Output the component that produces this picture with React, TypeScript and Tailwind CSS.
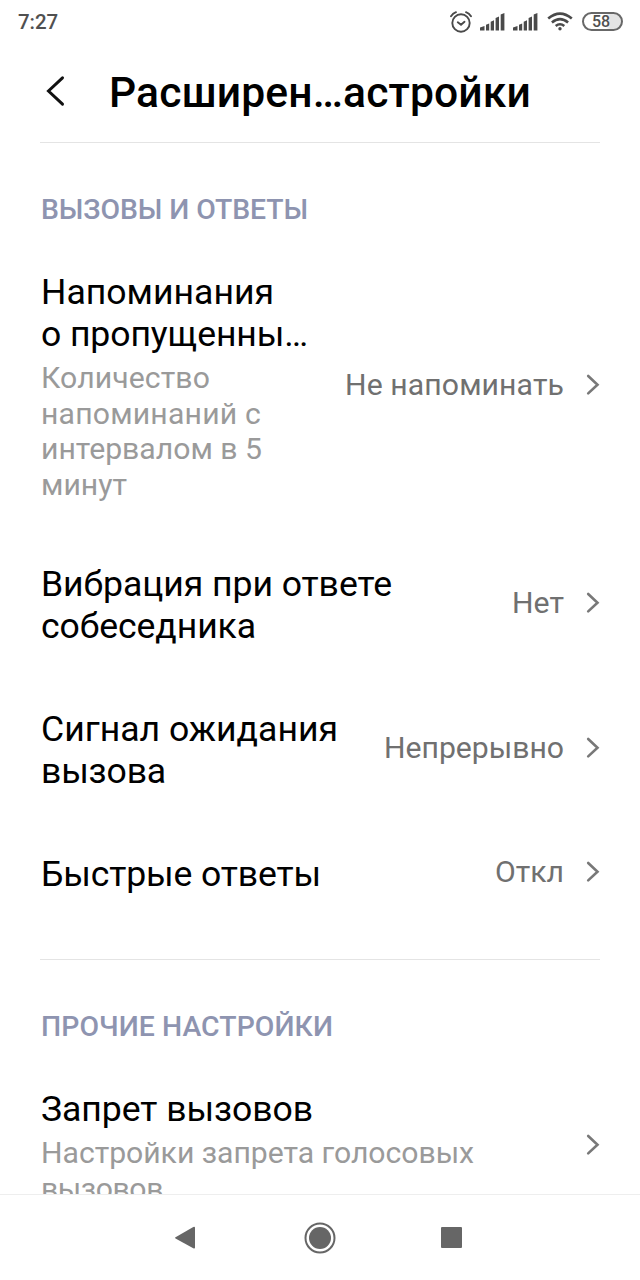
import React from "react";

function Chevron() {
  return (
    <svg className="block h-[22px] w-[14px] shrink-0" viewBox="0 0 14 22" fill="none" stroke="#787878" strokeWidth="2.6">
      <path d="M2.200 2 11.500 10.700 2.200 19.400" strokeLinecap="round" />
    </svg>
  );
}

type LineProps = { children: string; w: number; className: string };

// One line of text, tracked so that it fills the given width.
function Line({ children, w, className }: LineProps) {
  const ref = React.useRef<HTMLSpanElement>(null);
  const [spacing, setSpacing] = React.useState(0);
  React.useLayoutEffect(() => {
    if (ref.current) {
      setSpacing((w - ref.current.getBoundingClientRect().width) / children.length);
    }
  }, []);
  return (
    <div className={"whitespace-nowrap " + className}>
      <span ref={ref} style={{ letterSpacing: spacing }}>{children}</span>
    </div>
  );
}

type Text = [string, number];

const headClass = "text-[28.4px] leading-[36px] font-medium text-[#8e94b0]";

function Row({ title, sub, value }: { title: Text[]; sub?: Text[]; value?: Text }) {
  return (
    <div className="flex shrink-0 items-center justify-between">
      <div>
        {title.map(([t, w]) => (
          <Line key={t} w={w} className="text-[35.6px] leading-[42px] text-black">{t}</Line>
        ))}
        {sub && (
          <div className="mt-[5px]">
            {sub.map(([t, w]) => (
              <Line key={t} w={w} className="text-[30.2px] leading-[35.6px] text-[#9a9a9a]">{t}</Line>
            ))}
          </div>
        )}
      </div>
      <div className="mb-[4px] flex items-center gap-[22px]">
        {value && <Line w={value[1]} className="text-[30.2px] leading-[36px] text-[#707070]">{value[0]}</Line>}
        <Chevron />
      </div>
    </div>
  );
}

function Signal() {
  return (
    <svg className="h-[18px] w-[25px]" viewBox="0 0 25 18" fill="#4a4a4a">
      <path d="M0 14.500 4.500 13v4.500H0zM6 11.800 9.200 10.500v7H6zM10.700 8.700 14 7.200v10.300H10.700zM15.600 5 19 3.500v14H15.600zM20.700 1.500 24.400 0v17.500H20.700z" />
    </svg>
  );
}

function StatusIcons() {
  return (
    <div className="flex items-center">
      <svg className="h-[22px] w-[22px]" viewBox="0 0 22 22" fill="none" stroke="#4a4a4a" strokeWidth="1.900" strokeLinecap="round">
        <circle cx="11" cy="12" r="8.700" />
        <path d="M1 5.200Q2.800 2.300 6 1.200M21 5.200Q19.200 2.300 16 1.200M7.800 11.300 11 13.800 14.500 10.800" />
      </svg>
      <div className="ml-[8px] flex gap-[8px]">
        <Signal />
        <Signal />
      </div>
      <svg className="ml-[9px] h-[19px] w-[26px]" viewBox="0 0 26 19" fill="none" stroke="#4a4a4a" strokeWidth="2.600">
        <path d="M1.200 6.500Q13-3.400 24.800 6.500M4.900 10.500Q13 3.700 21.100 10.500M8.700 14Q13 10.500 17.300 14" />
        <circle cx="13" cy="16.700" r="1.700" fill="#4a4a4a" stroke="none" />
      </svg>
      <div className="ml-[9px] flex h-[19px] w-[41px] items-center justify-center rounded-full border-2 border-[#686868] bg-linear-to-r from-white from-60% to-[#e4e4e4] to-70% text-[16px] leading-none font-medium text-[#505050]">
        <span className="pr-[3px]">58</span>
      </div>
    </div>
  );
}

export default function App() {
  return (
    <div className="flex h-[1280px] w-[640px] flex-col overflow-hidden bg-white font-['Roboto','Noto_Sans',sans-serif]">
      <div className="flex h-[43px] shrink-0 items-center justify-between pr-[17px] pl-[18px]">
        <Line w={40} className="pt-[2px] text-[20.5px] font-medium text-[#505050]">7:27</Line>
        <StatusIcons />
      </div>
      <header className="mx-[40px] flex h-[100px] shrink-0 items-start border-b border-[#e4e4e4] pt-[23px]">
        <svg className="mt-[9px] h-[32px] w-[26px]" viewBox="0 0 26 32" fill="none" stroke="#111" strokeWidth="3">
          <path d="M22.500 2.800 8.500 16 22.500 29.200" strokeLinecap="round" />
        </svg>
        <h1>
          <Line w={422} className="ml-[43px] text-[42.6px] leading-[52px] font-medium text-black">Расширен…астройки</Line>
        </h1>
      </header>
      <main className="flex min-h-0 flex-1 flex-col overflow-hidden">
        <section className="mx-[40px] flex h-[817px] shrink-0 flex-col border-b border-[#e4e4e4] pt-[49px] pl-px">
          <Line w={267} className={headClass}>ВЫЗОВЫ И ОТВЕТЫ</Line>
          <div className="mt-[43px] flex flex-col gap-[61px]">
            <Row
              title={[["Напоминания", 233], ["о пропущенны…", 267]]}
              sub={[["Количество", 169], ["напоминаний с", 220], ["интервалом в 5", 221], ["минут", 86]]}
              value={["Не напоминать", 219]}
            />
            <Row title={[["Вибрация при ответе", 351], ["собеседника", 215]]} value={["Нет", 52]} />
            <Row title={[["Сигнал ожидания", 297], ["вызова", 125]]} value={["Непрерывно", 180]} />
            <Row title={[["Быстрые ответы", 280]]} value={["Откл", 69]} />
          </div>
        </section>
        <section className="mx-[40px] shrink-0 pt-[49px] pl-px">
          <Line w={292} className={headClass}>ПРОЧИЕ НАСТРОЙКИ</Line>
          <div className="mt-[43px]">
            <Row title={[["Запрет вызовов", 272]]} sub={[["Настройки запрета голосовых", 433], ["вызовов", 122]]} />
          </div>
        </section>
      </main>
      <nav className="flex h-[86px] shrink-0 border-t border-[#eeeeee] bg-white pt-[27px] pl-[174px]">
        <svg className="h-[32px] w-[22px]" viewBox="0 0 22 32" fill="#666">
          <path d="M1.500 15.300 19.300 5Q21 4.300 21 6V25.500Q21 27.200 19.300 26.300L1.500 16.500Q.5 15.900 1.500 15.300z" />
        </svg>
        <svg className="ml-[107.5px] h-[32px] w-[32px]" viewBox="0 0 32 32" fill="none">
          <circle cx="16" cy="16" r="14.500" stroke="#666" strokeWidth="2" />
          <circle cx="16" cy="16" r="11" fill="#666" />
        </svg>
        <div className="mt-[5px] ml-[105.5px] h-[21px] w-[21px] rounded-[1px] bg-[#666]" />
      </nav>
    </div>
  );
}
